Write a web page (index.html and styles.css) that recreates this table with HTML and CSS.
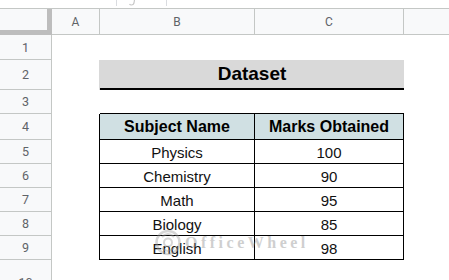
FILE: index.html
```html
<!DOCTYPE html>
<html>
<head>
<meta charset="utf-8">
<link rel="stylesheet" href="styles.css">
</head>
<body>
<div class="topbar">
  <span class="tb-gap1"></span>
  <span class="tb-line"></span>
  <span class="tb-mid"><svg class="tb-hook" width="8" height="6" viewBox="0 0 8 6"><path d="M6.5 0 L6 3 Q5.5 5 3.5 5 Q2 5 1.5 4" fill="none" stroke="#c8c8c8" stroke-width="1.2"/></svg></span>
  <span class="tb-line"></span>
</div>
<div class="sheet">
  <div class="corner"></div>
  <div class="ch">A</div>
  <div class="ch">B</div>
  <div class="ch">C</div>
  <div class="ch ch-last"></div>

  <div class="rh">1</div><div class="c"></div><div class="c"></div><div class="c"></div><div class="c"></div>

  <div class="rh">2</div><div class="c title-edge"></div><div class="title">Dataset</div><div class="c"></div>

  <div class="rh">3</div><div class="c"></div><div class="c t-top"></div><div class="c t-top"></div><div class="c"></div>

  <div class="rh">4</div><div class="c t-left"></div><div class="c t th">Subject Name</div><div class="c t th">Marks Obtained</div><div class="c"></div>

  <div class="rh">5</div><div class="c t-left"></div><div class="c t">Physics</div><div class="c t">100</div><div class="c"></div>
  <div class="rh">6</div><div class="c t-left"></div><div class="c t">Chemistry</div><div class="c t">90</div><div class="c"></div>
  <div class="rh">7</div><div class="c t-left"></div><div class="c t">Math</div><div class="c t">95</div><div class="c"></div>
  <div class="rh">8</div><div class="c t-left"></div><div class="c t">Biology</div><div class="c t">85</div><div class="c"></div>
  <div class="rh">9</div><div class="c t-left"></div><div class="c t">English</div><div class="c t">98</div><div class="c"></div>

  <div class="rh rh-last">10</div><div class="c"></div><div class="c"></div><div class="c"></div><div class="c"></div>
</div>
<div class="watermark">
  <svg class="wm-logo" width="28" height="31" viewBox="0 0 28 31">
    <circle cx="14" cy="15.5" r="11.5" fill="none" stroke="#9a9a9a" stroke-width="2.5"/>
    <path d="M8 10 Q14 4 20 10 M8 21 Q14 27 20 21" fill="none" stroke="#9a9a9a" stroke-width="2"/>
    <circle cx="14" cy="15.5" r="4" fill="none" stroke="#9a9a9a" stroke-width="2"/>
  </svg>
  <span class="wm-text">OfficeWheel</span>
</div>
</body>
</html>
```
FILE: styles.css
```css
html, body {
  margin: 0;
  padding: 0;
  background: #ffffff;
  overflow: hidden;
}
body {
  position: relative;
  width: 449px;
  height: 280px;
  font-family: "Liberation Sans", Arial, sans-serif;
}
.topbar {
  display: flex;
  height: 8px;
  border-bottom: 1px solid #c4c7c5;
  overflow: hidden;
  background: #ffffff;
}
.tb-gap1 { width: 116px; flex: none; }
.tb-line { width: 1px; height: 6px; background: #dadce0; flex: none; }
.tb-mid { width: 49px; flex: none; display: flex; padding-left: 11px; box-sizing: border-box; }
.tb-hook { display: block; }

.sheet {
  display: grid;
  grid-template-columns: 52px 48px 155px 149px 1fr;
  grid-template-rows: 26px 25px 30px 24px 26px 24px 24px 24px 24px 24px 20px;
  overflow: hidden;
}
.corner {
  background: #f8f9fa;
  border-right: 5px solid #bdbdbd;
  border-bottom: 5px solid #bdbdbd;
}
.ch {
  background: #f8f9fa;
  border-right: 1px solid #c4c7c5;
  border-bottom: 1px solid #c4c7c5;
  color: #5f6368;
  font-family: Roboto, "Liberation Sans", sans-serif;
  font-size: 12px;
  display: flex;
  align-items: center;
  justify-content: center;
}
.ch-last { border-right: none; }
.rh {
  background: #f8f9fa;
  border-right: 1px solid #c4c7c5;
  border-bottom: 1px solid #c4c7c5;
  color: #5f6368;
  font-family: Roboto, "Liberation Sans", sans-serif;
  font-size: 12.5px;
  display: flex;
  align-items: center;
  justify-content: center;
}
.rh-last {
  border-bottom: none;
  align-items: flex-start;
  padding-top: 15px;
  box-sizing: border-box;
  overflow: hidden;
}
.c {
  background: #ffffff;
}
.title-edge {
  border-right: 1px solid #d9d9d9;
}
.title {
  grid-column: span 2;
  background: #d9d9d9;
  border-bottom: 2px solid #000000;
  display: flex;
  align-items: center;
  justify-content: center;
  font-weight: bold;
  font-size: 19px;
  color: #000000;
}
.t-top { border-bottom: 1px solid #000000; }
.t-left { border-right: 1px solid #000000; }
.t {
  border-right: 1px solid #000000;
  border-bottom: 1px solid #000000;
  display: flex;
  align-items: flex-end;
  justify-content: center;
  padding-bottom: 2px;
  box-sizing: border-box;
  font-size: 15px;
  color: #111111;
}
.th {
  background: #d0e0e3;
  font-weight: bold;
  font-size: 16px;
  padding-bottom: 3px;
  color: #000000;
}
.watermark {
  position: absolute;
  left: 154px;
  top: 227px;
  display: flex;
  align-items: center;
  gap: 3px;
  opacity: 0.4;
  pointer-events: none;
}
.wm-logo { display: block; }
.wm-text {
  font-family: "Liberation Serif", "Times New Roman", serif;
  font-size: 16px;
  font-weight: bold;
  letter-spacing: 3.5px;
  color: #8a8a8a;
}
```
